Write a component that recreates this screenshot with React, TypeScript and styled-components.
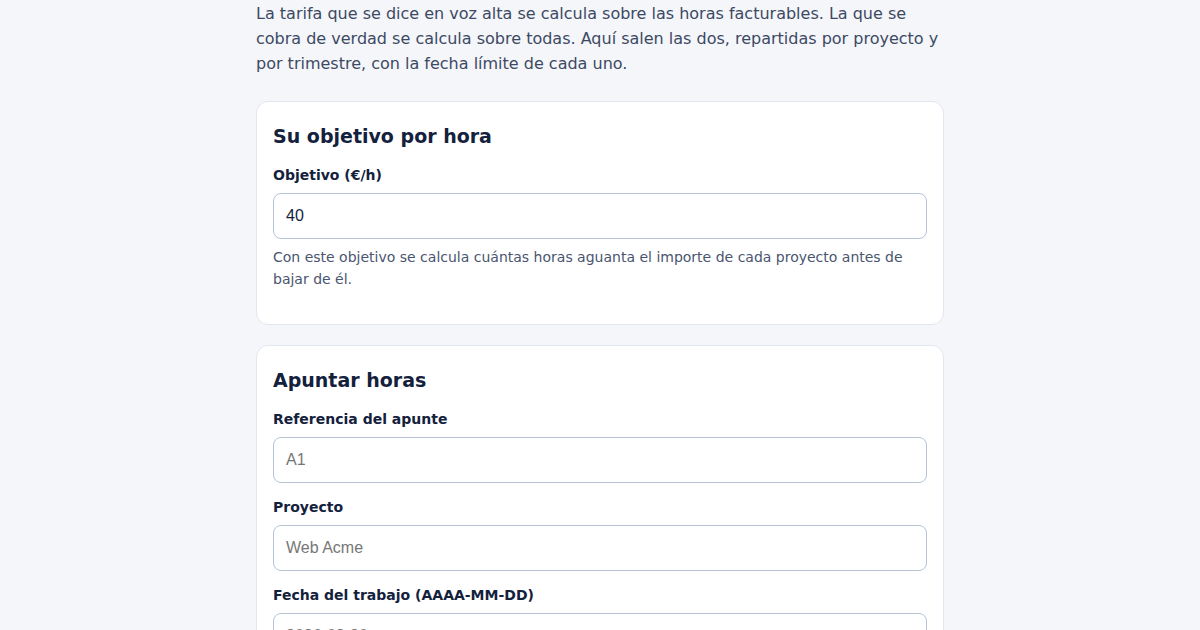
import styled, { createGlobalStyle } from 'styled-components'

const GlobalStyle = createGlobalStyle`
  html, body {
    margin: 0;
    padding: 0;
    background: #f4f6fa;
  }
  body {
    font-family: "DejaVu Sans", "Noto Sans", sans-serif;
    color: #14213d;
  }
  * {
    box-sizing: border-box;
  }
`

const Page = styled.main`
  width: 688px;
  margin: 0 auto;
  padding-bottom: 40px;
`

const Intro = styled.p`
  margin: 0 0 25px;
  padding-top: 1px;
  font-size: 16px;
  line-height: 25px;
  color: #3d4963;
`

const Card = styled.section`
  background: #ffffff;
  border: 1px solid #e2e6ef;
  border-radius: 12px;
  padding: 20px 16px;
  margin-bottom: 20px;
`

const CardTitle = styled.h2`
  margin: 0 0 15px;
  font-size: 19px;
  line-height: 28px;
  font-weight: bold;
  color: #14213d;
`

const Field = styled.div`
  display: flex;
  flex-direction: column;
  gap: 8px;
  margin-bottom: 14px;

  &:last-child {
    margin-bottom: 0;
  }
`

const Label = styled.label`
  font-size: 14px;
  line-height: 20px;
  font-weight: bold;
  color: #14213d;
`

const Input = styled.input`
  width: 100%;
  height: 46px;
  padding: 0 12px;
  border: 1px solid #b8c3da;
  border-radius: 8px;
  background: #ffffff;
  font-family: "Liberation Sans", Arial, sans-serif;
  font-size: 16px;
  color: #14213d;
  outline: none;

  &::placeholder {
    color: #767676;
  }
`

const Help = styled.p`
  margin: -1px 0 14px;
  font-size: 14px;
  line-height: 22px;
  color: #4a5570;
`

type FieldProps = {
  label: string
  value?: string
  placeholder?: string
}

const FormField = ({ label, value, placeholder }: FieldProps) => (
  <Field>
    <Label>{label}</Label>
    <Input defaultValue={value} placeholder={placeholder} />
  </Field>
)

export default function App() {
  return (
    <>
      <GlobalStyle />
      <Page>
        <Intro>
          La tarifa que se dice en voz alta se calcula sobre las horas facturables. La que se
          cobra de verdad se calcula sobre todas. Aquí salen las dos, repartidas por proyecto y
          por trimestre, con la fecha límite de cada uno.
        </Intro>

        <Card>
          <CardTitle>Su objetivo por hora</CardTitle>
          <Field>
            <Label>Objetivo (€/h)</Label>
            <Input defaultValue="40" />
            <Help>
              Con este objetivo se calcula cuántas horas aguanta el importe de cada proyecto antes de
              bajar de él.
            </Help>
          </Field>
        </Card>

        <Card>
          <CardTitle>Apuntar horas</CardTitle>
          <FormField label="Referencia del apunte" placeholder="A1" />
          <FormField label="Proyecto" placeholder="Web Acme" />
          <FormField label="Fecha del trabajo (AAAA-MM-DD)" placeholder="2026-02-20" />
          <FormField label="Horas" placeholder="2,5" />
        </Card>
      </Page>
    </>
  )
}
